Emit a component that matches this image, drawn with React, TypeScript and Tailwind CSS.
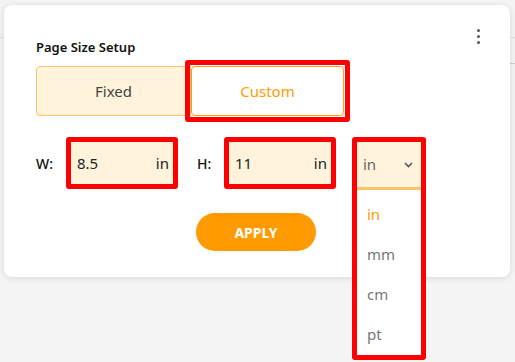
import React from 'react';

const units = ['in', 'mm', 'cm', 'pt'];

const Marked: React.FC<{ className?: string; children: React.ReactNode }> = ({ className = '', children }) => (
  <div className={`border-[5px] border-[#ff0000] rounded-[3px] ${className}`}>{children}</div>
);

const SizeInput: React.FC<{ value: string }> = ({ value }) => (
  <Marked className="w-[112px]">
    <div className="h-[42px] bg-[#fff3dc] flex items-center justify-between pl-[6px] pr-[4px] text-[15px] text-[#222]">
      <span>{value}</span>
      <span>in</span>
    </div>
  </Marked>
);

export default function App() {
  return (
    <div className="relative w-[515px] h-[362px] bg-[#f4f4f4] overflow-hidden font-['Segoe_UI','Noto_Sans',sans-serif]">
      {/* page behind the popup */}
      <div className="h-[37px]" />
      <div className="h-px bg-[#e0e0e0]" />
      <div className="h-[25px]" />
      <div className="h-px w-[80px] ml-auto bg-[#cfcfcf]" />

      <div className="absolute left-[4px] top-[5px] w-[506px] h-[272px] bg-white rounded-[8px] shadow-[0_1px_6px_rgba(0,0,0,0.12)] pl-[32px] pt-[33px]">
        <button className="absolute right-[30px] top-[24px] flex flex-col gap-[3px] items-center p-0">
          <span className="w-[3px] h-[3px] rounded-full bg-[#555]" />
          <span className="w-[3px] h-[3px] rounded-full bg-[#555]" />
          <span className="w-[3px] h-[3px] rounded-full bg-[#555]" />
        </button>

        <h2 className="text-[13px] leading-[18px] font-semibold text-[#111]">Page Size Setup</h2>

        <div className="mt-[10px] flex w-[308px] h-[50px]">
          <button className="flex-1 bg-[#fff3dc] border border-[#fcc56c] rounded-l-[4px] text-[15px] text-[#444]">
            Fixed
          </button>
          <div className="relative flex-1 flex">
            <button className="flex-1 bg-white border border-[#ffa01a] rounded-[4px] text-[15px] text-[#ff9c00]">
              Custom
            </button>
            <div className="absolute -inset-[6px] border-[5px] border-[#ff0000] rounded-[3px]" />
          </div>
        </div>

        <div className="mt-[21px] flex items-start h-[52px]">
          <span className="w-[30px] h-[52px] flex items-center text-[14px] font-medium text-[#111]">W:</span>
          <SizeInput value="8.5" />
          <span className="ml-[19px] w-[27px] h-[52px] flex items-center text-[14px] font-medium text-[#111]">H:</span>
          <SizeInput value="11" />
          {/* select with its open list; the list hangs below the row */}
          <div className="ml-[16px] w-[74px] h-[52px]">
            <Marked className="h-[223px] bg-white">
              <div className="h-[45px] bg-[#fff3dc] flex items-center justify-between pl-[6px] pr-[8px]">
                <span className="text-[15px] text-[#666]">in</span>
                <svg width="9" height="6" viewBox="0 0 9 6" fill="none">
                  <path d="M1 1l3.5 3.5L8 1" stroke="#555" strokeWidth="1.6" />
                </svg>
              </div>
              <div className="h-[3px] bg-[#ffc266]" />
              <ul className="pt-[4px]">
                {units.map((u, i) => (
                  <li
                    key={u}
                    className={`h-[40px] flex items-center pl-[10px] text-[15px] ${i === 0 ? 'text-[#ff9c00]' : 'text-[#777]'}`}
                  >
                    {u}
                  </li>
                ))}
              </ul>
            </Marked>
          </div>
        </div>

        <div className="mt-[24px] ml-[160px] w-[120px] h-[38px] rounded-full bg-[#ff9b00] flex items-center justify-center text-[14px] font-bold text-white">
          APPLY
        </div>
      </div>
    </div>
  );
}
